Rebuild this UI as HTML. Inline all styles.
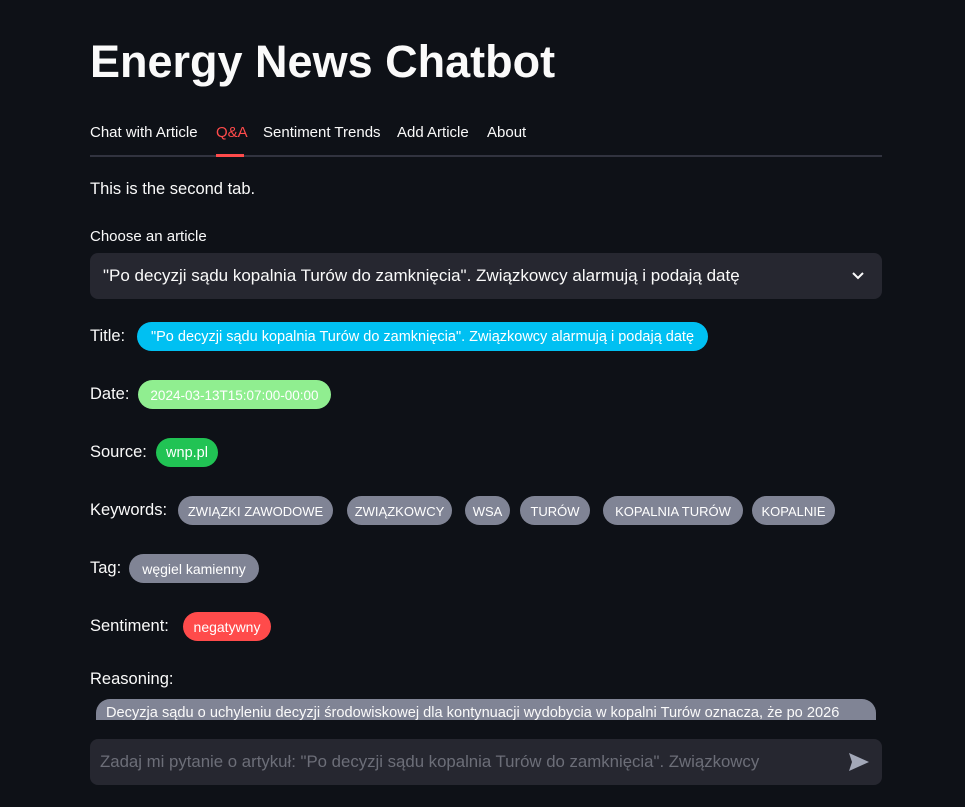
<!DOCTYPE html>
<html><head><meta charset="utf-8"><style>
*{margin:0;padding:0;box-sizing:border-box}
body{width:965px;height:807px;background:#0e1117;color:#fafafa;font-family:"Liberation Sans",sans-serif;position:relative;overflow:hidden}
.a{position:absolute;white-space:nowrap}
.lbl{font-size:16.5px}
.p{position:absolute;height:29px;border-radius:15px;font-size:14.5px;line-height:31px;text-align:center;color:#fff;white-space:nowrap;overflow:hidden;background:#808495}
.tab{font-size:15px;top:124px}
</style></head><body>
<div class="a" style="left:90px;top:36px;font-size:45px;font-weight:bold">Energy News Chatbot</div>
<div class="a tab" style="left:90px">Chat with Article</div>
<div class="a tab" style="left:216px;color:#ff4b4b">Q&amp;A</div>
<div class="a tab" style="left:263px">Sentiment Trends</div>
<div class="a tab" style="left:397px">Add Article</div>
<div class="a tab" style="left:487px">About</div>
<div class="a" style="left:90px;top:155px;width:792px;height:2px;background:#31333f"></div>
<div class="a" style="left:216px;top:154px;width:28px;height:3px;background:#ff4b4b"></div>
<div class="a lbl" style="left:90px;top:180px">This is the second tab.</div>
<div class="a" style="left:90px;top:228px;font-size:15px">Choose an article</div>
<div class="a" style="left:90px;top:253px;width:792px;height:46px;background:#262730;border-radius:8px"></div>
<div class="a" style="left:103px;top:266px;font-size:17px">"Po decyzji sądu kopalnia Turów do zamknięcia". Związkowcy alarmują i podają datę</div>
<svg class="a" style="left:851px;top:270px" width="14" height="12" viewBox="0 0 14 12"><path d="M2 3l5 5 5-5" stroke="#fafafa" stroke-width="2" fill="none"/></svg>
<div class="a lbl" style="left:90px;top:327px">Title:</div>
<div class="p" style="left:137px;top:322px;width:571px;background:#00c0f2">"Po decyzji sądu kopalnia Turów do zamknięcia". Związkowcy alarmują i podają datę</div>
<div class="a lbl" style="left:90px;top:385px">Date:</div>
<div class="p" style="left:138px;top:380px;width:193px;background:#90ee90;font-size:13.5px">2024-03-13T15:07:00-00:00</div>
<div class="a lbl" style="left:90px;top:443px">Source:</div>
<div class="p" style="left:156px;top:438px;width:62px;background:#21c354">wnp.pl</div>
<div class="a lbl" style="left:90px;top:501px">Keywords:</div>
<div class="p" style="left:178px;top:496px;width:155px;font-size:13px">ZWIĄZKI ZAWODOWE</div>
<div class="p" style="left:347px;top:496px;width:105px;font-size:13px">ZWIĄZKOWCY</div>
<div class="p" style="left:465px;top:496px;width:45px;font-size:13px">WSA</div>
<div class="p" style="left:520px;top:496px;width:70px;font-size:13px">TURÓW</div>
<div class="p" style="left:603px;top:496px;width:140px;font-size:13px">KOPALNIA TURÓW</div>
<div class="p" style="left:752px;top:496px;width:83px;font-size:13px">KOPALNIE</div>
<div class="a lbl" style="left:90px;top:559px">Tag:</div>
<div class="p" style="left:129px;top:554px;width:130px;font-size:14px">węgiel kamienny</div>
<div class="a lbl" style="left:90px;top:617px">Sentiment:</div>
<div class="p" style="left:183px;top:612px;width:88px;background:#ff4b4b;font-size:14px">negatywny</div>
<div class="a lbl" style="left:90px;top:670px">Reasoning:</div>
<div class="a" style="left:96px;top:699px;width:780px;height:21px;background:#808495;border-radius:14px 14px 0 0;overflow:hidden"><div style="padding:6px 0 0 10px;font-size:14.6px;white-space:nowrap">Decyzja sądu o uchyleniu decyzji środowiskowej dla kontynuacji wydobycia w kopalni Turów oznacza, że po 2026</div></div>
<div class="a" style="left:90px;top:739px;width:792px;height:46px;background:#262730;border-radius:8px;overflow:hidden"><div style="padding:13px 0 0 10px;font-size:16.8px;color:#6c6e78;white-space:nowrap">Zadaj mi pytanie o artykuł: "Po decyzji sądu kopalnia Turów do zamknięcia". Związkowcy</div></div>
<svg class="a" style="left:848px;top:752px" width="22" height="20" viewBox="0 0 22 20"><path d="M1 1L21 10 1 19 4 10z" fill="#a3a8b8"/></svg>
</body></html>
